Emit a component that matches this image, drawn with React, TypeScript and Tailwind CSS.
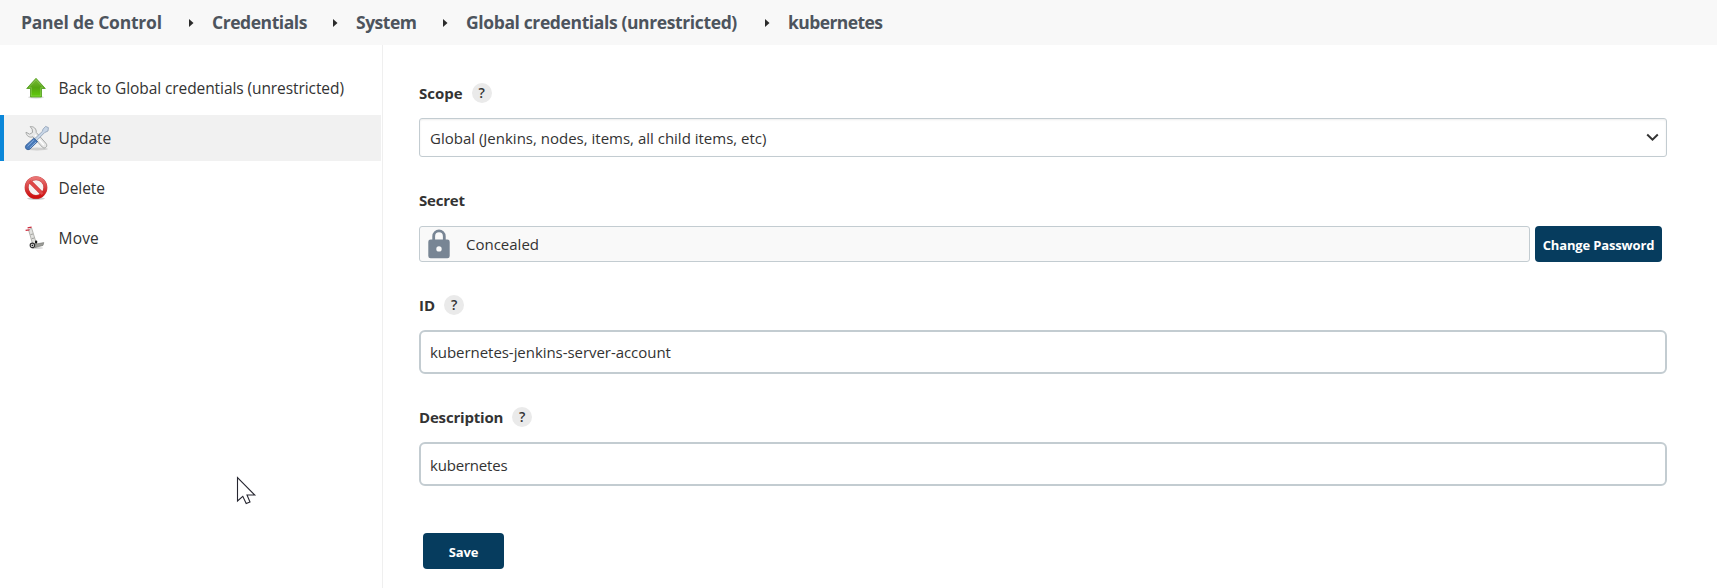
import React from "react";

function Help() {
  return (
    <span className="flex h-5 w-5 items-center justify-center rounded-full bg-[#eaeaea] text-[14px] font-semibold leading-5 text-[#333]">
      ?
    </span>
  );
}

function Crumb({ label, width, spacing }: { label: string; width: string; spacing: string }) {
  return <li className={`whitespace-nowrap ${width} ${spacing}`}>{label}</li>;
}

function Arrow() {
  return (
    <li className="flex w-[23px] items-center">
      <svg width="5" height="8" viewBox="0 0 5 8">
        <path d="M0 0 4.5 4 0 8z" fill="#2b2b2b" />
      </svg>
    </li>
  );
}

function UpIcon() {
  return (
    <svg width="24" height="24" viewBox="0 0 24 24">
      <defs>
        <linearGradient id="up" x1="0" y1="0" x2="0" y2="1">
          <stop offset="0" stopColor="#7dbb3c" />
          <stop offset="0.5" stopColor="#55a511" />
          <stop offset="1" stopColor="#62cf0c" />
        </linearGradient>
      </defs>
      <ellipse cx="12" cy="21.3" rx="8" ry="1.5" fill="#000" opacity="0.13" />
      <path d="M12 2.3 21.3 12.5H17.5V21H6.5V12.5H2.7z" fill="url(#up)" stroke="#4f9a1c" strokeWidth="0.8" />
      <path d="M12 3.8 19 11.6H16.6V20H7.4V11.6H5z" fill="none" stroke="#a4d878" strokeWidth="0.6" opacity="0.7" />
    </svg>
  );
}

function ToolsIcon() {
  return (
    <svg width="26" height="26" viewBox="0 0 26 26">
      <ellipse cx="14" cy="24" rx="11" ry="1.5" fill="#000" opacity="0.14" />
      <path
        d="M7.2 1.6C10.8 1.2 13.6 3.8 13.2 7.4L22.8 18.2C25.5 21 22 24.8 19.2 22L10 11.8C6.4 13 3.2 10.8 3 7.2L6.6 9.2 9.6 7.4 9.2 4.2z"
        fill="#e9e9e9"
        stroke="#a5a7a6"
        strokeWidth="1"
      />
      <path d="M12 10 20.8 20" stroke="#fff" strokeWidth="1.2" />
      <path d="M20 4.2 22.6 1.4 25.4 2.6 25 6 21.6 7.6 13.6 15.6 11.6 13.8 19.4 6.4z" fill="#c7d5e6" stroke="#8c9db4" strokeWidth="0.8" />
      <path d="M10.8 13.2 14.6 16.6 7 24C4.2 26 1 23 3 20.2z" fill="#4779b9" stroke="#2b5793" strokeWidth="0.8" />
      <path d="M10.8 15 4.6 21.2M13 17 6.8 23" stroke="#96b9e4" strokeWidth="0.9" />
    </svg>
  );
}

function StopIcon() {
  return (
    <svg width="24" height="24" viewBox="0 0 24 24">
      <defs>
        <linearGradient id="stop" x1="0" y1="0" x2="0" y2="1">
          <stop offset="0" stopColor="#e97373" />
          <stop offset="0.55" stopColor="#d63a3a" />
          <stop offset="1" stopColor="#cf1010" />
        </linearGradient>
      </defs>
      <ellipse cx="12" cy="22.6" rx="9" ry="1.3" fill="#000" opacity="0.2" />
      <circle cx="12" cy="11.6" r="9.4" fill="#f7f3f3" stroke="#c24444" strokeWidth="4" />
      <path d="M5.5 5 18.5 18.2" stroke="#c83a3a" strokeWidth="3.8" />
      <circle cx="12" cy="11.6" r="9.4" fill="none" stroke="url(#stop)" strokeWidth="3.2" />
      <path d="M5.5 5 18.5 18.2" stroke="#e04848" strokeWidth="2.6" />
    </svg>
  );
}

function TrolleyIcon() {
  return (
    <svg width="24" height="24" viewBox="0 0 24 24">
      <ellipse cx="13" cy="22" rx="6" ry="1" fill="#000" opacity="0.15" />
      <path d="M4.6 4 8.8 18.6 12.4 17.4 7.6 2z" fill="#e2e2df" stroke="#a4a4a0" strokeWidth="0.8" />
      <path d="M6.6 8.6 9 8M7.8 12.6 10.4 12" stroke="#8f8f8b" strokeWidth="0.8" />
      <path d="M1.6 4.4 5.4 3.8M3.6 1.8 7.6 1.2" stroke="#cc2a3c" strokeWidth="1.3" />
      <path d="M9 18.6 19.8 16.6 19 19.4 11 21.6z" fill="#9b9c98" stroke="#747570" strokeWidth="0.6" />
      <rect x="11" y="14.4" width="2.2" height="3" rx="1" fill="#111" />
      <circle cx="8.4" cy="19.4" r="2.2" fill="#fff" stroke="#333" strokeWidth="1.2" />
      <circle cx="8.4" cy="19.4" r="0.9" fill="#222" />
    </svg>
  );
}

function Task({ icon, label, spacing, active = false }: { icon: React.ReactNode; label: string; spacing: string; active?: boolean }) {
  return (
    <a
      className={`flex h-[46px] w-[381px] items-center border-l-4 text-[15.5px] font-medium text-[#333] ${
        active ? "border-[#0b87d9] bg-[#f1f1f1]" : "border-transparent"
      }`}
    >
      <span className="flex w-[54.5px] items-center justify-center pl-[9px]">{icon}</span>
      <span className={`whitespace-nowrap pt-0.5 ${spacing}`}>{label}</span>
    </a>
  );
}

function Label({ text, spacing, help = false }: { text: string; spacing: string; help?: boolean }) {
  return (
    <div className="flex h-5 items-center gap-[9px]">
      <span className={`pb-px text-[15px] font-bold leading-5 text-[#333] ${spacing}`}>{text}</span>
      {help && <Help />}
    </div>
  );
}

export default function App() {
  return (
    <div className="relative flex h-[588px] w-[1717px] flex-col overflow-hidden bg-white font-['Open_Sans','Noto_Sans',sans-serif] text-[#333]">
      <header className="h-[45px] bg-[#f8f8f8] pl-[21px]">
        <ol className="flex h-[45px] items-center text-[17.5px] font-bold text-[#4d545d]">
          <Crumb label="Panel de Control" width="w-[168px]" spacing="tracking-[-0.23px]" />
          <Arrow />
          <Crumb label="Credentials" width="w-[121px]" spacing="tracking-[-0.45px]" />
          <Arrow />
          <Crumb label="System" width="w-[87px]" spacing="tracking-[-0.5px]" />
          <Arrow />
          <Crumb label="Global credentials (unrestricted)" width="w-[299px]" spacing="tracking-[-0.38px]" />
          <Arrow />
          <Crumb label="kubernetes" width="w-[120px]" spacing="tracking-[-0.58px]" />
        </ol>
      </header>

      <div className="flex flex-1">
        <nav className="flex w-[383px] flex-col gap-1 border-r border-[#efefef] pt-5">
          <Task icon={<UpIcon />} label="Back to Global credentials (unrestricted)" spacing="tracking-[-0.08px]" />
          <Task icon={<ToolsIcon />} label="Update" spacing="tracking-[-0.1px]" active />
          <Task icon={<StopIcon />} label="Delete" spacing="tracking-[-0.05px]" />
          <Task icon={<TrolleyIcon />} label="Move" spacing="tracking-[0.2px]" />
        </nav>

        <main className="flex flex-1 flex-col pl-9 pr-[50px] pt-[38px]">
          <Label text="Scope" spacing="tracking-[0px]" help />
          <div className="mt-[15px] flex h-[39px] items-center justify-between rounded-[3px] border border-[#c3ccd1] pl-[10px] pr-[7px] shadow-[inset_0_1px_2px_rgba(0,0,0,0.08)]">
            <span className="pt-0.5 text-[15px] tracking-[0px]">Global (Jenkins, nodes, items, all child items, etc)</span>
            <svg width="13" height="9" viewBox="0 0 13 9">
              <path d="M1.2 1.5 6.5 6.6 11.8 1.5" fill="none" stroke="#333" strokeWidth="2" />
            </svg>
          </div>

          <div className="mt-[33px]">
            <Label text="Secret" spacing="tracking-[-0.2px]" />
          </div>
          <div className="mt-4 flex h-9 gap-[5px]">
            <div className="flex w-[1111px] items-center rounded-[3px] border border-[#c3ccd1] bg-[#f9f9f9] pl-2">
              <svg className="-mt-px" width="22" height="30" viewBox="0 0 22 30">
                <path d="M5.7 11V7.2a5.3 5.3 0 0 1 10.6 0V11" fill="none" stroke="#788594" strokeWidth="2.8" />
                <path
                  fillRule="evenodd"
                  d="M2.6 10.4H19.4A2.3 2.3 0 0 1 21.7 12.7V27A2.3 2.3 0 0 1 19.4 29.3H2.6A2.3 2.3 0 0 1 .3 27V12.7A2.3 2.3 0 0 1 2.6 10.4zM11 17.2a2.7 2.7 0 1 0 0 5.4a2.7 2.7 0 1 0 0-5.4z"
                  fill="#788594"
                />
              </svg>
              <span className="pl-4 text-[15px]">Concealed</span>
            </div>
            <button className="h-9 w-[127px] whitespace-nowrap rounded-[4px] bg-[#063c5e] pt-[3px] text-[13px] font-bold tracking-[-0.16px] text-white">
              Change Password
            </button>
          </div>

          <div className="mt-[33px]">
            <Label text="ID" spacing="tracking-[0.1px]" help />
          </div>
          <input
            readOnly
            value="kubernetes-jenkins-server-account"
            className="mt-[15px] h-11 rounded-[6px] border-2 border-[#c3ccd1] px-[9px] text-[15px] tracking-[-0.05px] outline-none"
          />

          <div className="mt-[33px]">
            <Label text="Description" spacing="tracking-[-0.18px]" help />
          </div>
          <input
            readOnly
            value="kubernetes"
            className="mt-[15px] h-11 rounded-[6px] border-2 border-[#c3ccd1] px-[9px] pt-0.5 text-[15px] tracking-[-0.2px] outline-none"
          />

          <button className="ml-1 mt-[47px] h-9 w-[81px] rounded-[4px] bg-[#063c5e] pt-[3px] text-[13px] font-bold tracking-[-0.16px] text-white">
            Save
          </button>
        </main>
      </div>

      <svg className="absolute left-[236px] top-[476px]" width="21" height="30" viewBox="0 0 21 30">
        <path
          d="M1.5 1.5V25L6.8 20.3 10.2 27.5 14 26 11 19H18.8z"
          fill="#fff"
          stroke="#262630"
          strokeWidth="1.1"
        />
      </svg>
    </div>
  );
}
